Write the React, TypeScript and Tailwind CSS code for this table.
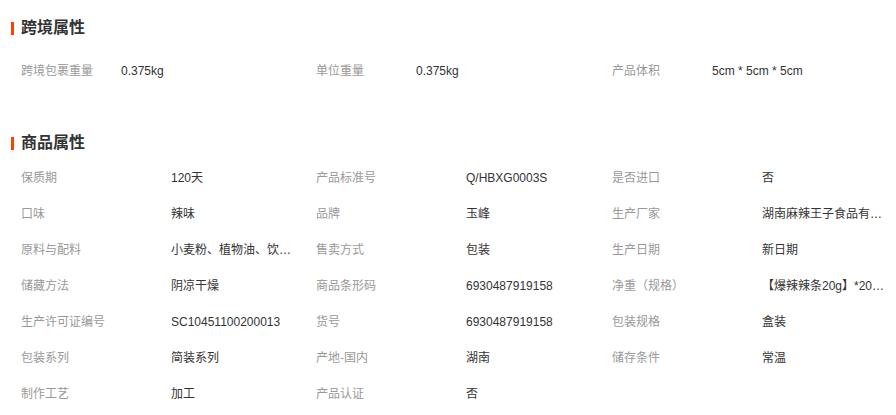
const crossBorder = [
  { label: '跨境包裹重量', value: '0.375kg' },
  { label: '单位重量', value: '0.375kg' },
  { label: '产品体积', value: '5cm * 5cm * 5cm' },
];

const attrs = [
  { label: '保质期', value: '120天' },
  { label: '产品标准号', value: 'Q/HBXG0003S' },
  { label: '是否进口', value: '否' },
  { label: '口味', value: '辣味' },
  { label: '品牌', value: '玉峰' },
  { label: '生产厂家', value: '湖南麻辣王子食品有限公司' },
  { label: '原料与配料', value: '小麦粉、植物油、饮用水、辣椒' },
  { label: '售卖方式', value: '包装' },
  { label: '生产日期', value: '新日期' },
  { label: '储藏方法', value: '阴凉干燥' },
  { label: '商品条形码', value: '6930487919158' },
  { label: '净重（规格）', value: '【爆辣辣条20g】*20包*2盒' },
  { label: '生产许可证编号', value: 'SC10451100200013' },
  { label: '货号', value: '6930487919158' },
  { label: '包装规格', value: '盒装' },
  { label: '包装系列', value: '简装系列' },
  { label: '产地-国内', value: '湖南' },
  { label: '储存条件', value: '常温' },
  { label: '制作工艺', value: '加工' },
  { label: '产品认证', value: '否' },
];

function SectionTitle({ title }: { title: string }) {
  return (
    <div className="flex h-5 items-center">
      <span className="ml-[11px] mr-[7px] h-[13px] w-[3px] bg-[#ff4000]" />
      <span className="text-[16px] font-bold leading-5 text-[#333]">{title}</span>
    </div>
  );
}

export default function App() {
  return (
    <div
      className="h-[415px] w-[896px] overflow-hidden bg-white pt-[18px] text-[12px]"
      style={{ fontFamily: '"Liberation Sans", "Noto Sans CJK SC", sans-serif' }}
    >
      <SectionTitle title="跨境属性" />
      <div className="mt-[15px] grid grid-cols-[295px_296px_1fr] pl-[21px]">
        {crossBorder.map((item) => (
          <div key={item.label} className="flex h-9 items-center">
            <span className="w-[100px] shrink-0 text-[#999]">{item.label}</span>
            <span className="text-[#333]">{item.value}</span>
          </div>
        ))}
      </div>

      <div className="mt-[44px]">
        <SectionTitle title="商品属性" />
      </div>
      <div className="mt-[7px] grid grid-cols-[295px_296px_1fr] pl-[21px]">
        {attrs.map((item) => (
          <div key={item.label} className="flex h-9 items-center">
            <span className="w-[150px] shrink-0 text-[#999]">{item.label}</span>
            <span className="max-w-[124px] truncate text-[#333]">{item.value}</span>
          </div>
        ))}
      </div>
    </div>
  );
}
